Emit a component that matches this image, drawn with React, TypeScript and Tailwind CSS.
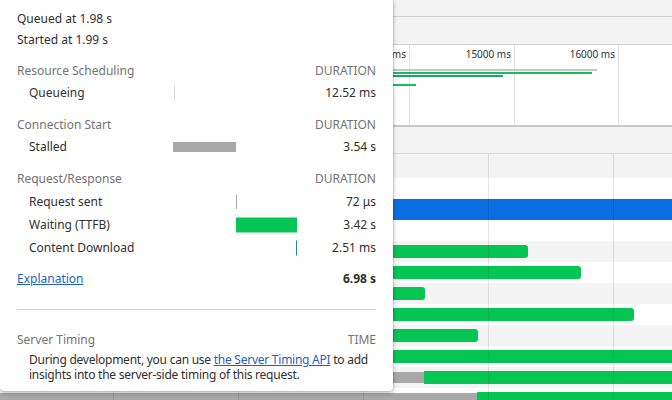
import type { ReactNode } from 'react'

type WaterfallRow = {
  height: number
  shaded?: boolean
  selected?: boolean
  stalled?: [number, number]
  waiting?: [number, number]
}

const rows: WaterfallRow[] = [
  { height: 24, shaded: true },
  { height: 21 },
  { height: 21, selected: true },
  { height: 21 },
  { height: 21, shaded: true, waiting: [300, 528] },
  { height: 21, waiting: [300, 581] },
  { height: 21, shaded: true, waiting: [300, 425] },
  { height: 21, waiting: [300, 634] },
  { height: 21, shaded: true, waiting: [300, 478] },
  { height: 21, waiting: [300, 720] },
  { height: 21, shaded: true, stalled: [0, 424], waiting: [424, 720] },
  { height: 21, stalled: [0, 477], waiting: [477, 720] },
]

const gridLines = [113, 238, 363, 488, 613]
const ticks = [
  { x: 409, label: '14000 ms' },
  { x: 514, label: '15000 ms' },
  { x: 618, label: '16000 ms' },
]

// thin lines in the overview strip: [top, right end, colour]
const overviewBars: [number, number, string][] = [
  [24, 597, '#c6c6c6'],
  [27, 592, '#12bf5c'],
  [30, 503, '#239f6e'],
  [39, 416, '#12bf5c'],
]

type TimingBar = { left: number; width: number; height: number; color: string }

function TimingRow({ name, value, bar, tall }: { name: string; value: string; bar?: TimingBar; tall?: boolean }) {
  return (
    <div className={`grid grid-cols-[156px_124px_1fr] items-center ${tall ? 'h-[23px]' : 'h-[22px]'}`}>
      <span className="pl-3">{name}</span>
      <div className="relative h-full">
        {bar && (
          <div
            className="absolute top-1/2 -translate-y-1/2"
            style={{ left: bar.left, width: bar.width, height: bar.height, background: bar.color }}
          />
        )}
      </div>
      <span className="text-right">{value}</span>
    </div>
  )
}

function Section({ title, label = 'DURATION', className = '', children }: { title: string; label?: string; className?: string; children?: ReactNode }) {
  return (
    <div className={className}>
      <div className="flex h-[22px] items-center justify-between text-[#737373]">
        <span>{title}</span>
        <span>{label}</span>
      </div>
      {children}
    </div>
  )
}

export default function App() {
  return (
    <div className="relative h-[400px] w-[672px] overflow-hidden bg-white font-['Noto_Sans',sans-serif] text-[#303030]">
      {/* Network panel behind the popover */}
      <div className="h-[17px] border-b border-[#d0d0d0] bg-[#f3f3f3]" />
      <div className="h-[28px] border-b border-[#d0d0d0] bg-[#f3f3f3]" />

      {/* Overview */}
      <div className="relative h-[82px] border-b-2 border-[#c8c8c8] bg-white text-[10px]">
        {ticks.map((t) => (
          <div key={t.x}>
            <div className="absolute inset-y-0 w-px bg-[#dedede]" style={{ left: t.x }} />
            <span className="absolute top-[2px] -translate-x-full pr-[3px] leading-[14px]" style={{ left: t.x }}>
              {t.label}
            </span>
          </div>
        ))}
        {overviewBars.map(([top, end, color]) => (
          <div key={top} className="absolute left-[250px] h-[2px]" style={{ top, width: end - 250, background: color }} />
        ))}
      </div>

      <div className="h-[27px] border-b border-[#dcdcdc] bg-[#f3f3f3]" />

      {/* Waterfall rows */}
      <div className="relative">
        {rows.map((r, i) => (
          <div
            key={i}
            className={`relative ${r.selected ? 'bg-[#0a6ee2]' : r.shaded ? 'bg-[#f4f4f4]' : 'bg-white'}`}
            style={{ height: r.height }}
          >
            {r.stalled && (
              <div
                className="absolute top-[5px] h-[11px] bg-[#a9a9a9]"
                style={{ left: r.stalled[0], width: r.stalled[1] - r.stalled[0] }}
              />
            )}
            {r.waiting && (
              <div
                className="absolute top-[4px] h-[13px] rounded-r-[3px] bg-[#05c654]"
                style={{ left: r.waiting[0], width: r.waiting[1] - r.waiting[0] }}
              />
            )}
          </div>
        ))}
        {gridLines.map((x) => (
          <div key={x} className="absolute inset-y-0 w-px bg-black/10" style={{ left: x }} />
        ))}
      </div>

      {/* Timing popover */}
      <div className="absolute left-0 top-0 h-[391px] w-[393px] rounded-b-[4px] bg-white px-[17px] pt-[8px] text-[12px] shadow-[0_0_0_1px_rgba(0,0,0,0.06),0_2px_4px_rgba(0,0,0,0.2),0_2px_6px_rgba(0,0,0,0.1)]">
        <div className="flex h-[21px] items-center">Queued at 1.98 s</div>
        <div className="flex h-[21px] items-center">Started at 1.99 s</div>

        <Section title="Resource Scheduling" className="mt-[10px]">
          <TimingRow name="Queueing" value="12.52 ms" bar={{ left: 1, width: 1, height: 15, color: '#d6d6d6' }} />
        </Section>

        <Section title="Connection Start" className="mt-[10px]">
          <TimingRow name="Stalled" value="3.54 s" bar={{ left: 0, width: 63, height: 10, color: '#a9a9a9' }} />
        </Section>

        <Section title="Request/Response" className="mt-[10px]">
          <TimingRow tall name="Request sent" value="72 μs" bar={{ left: 63, width: 1, height: 14, color: '#a9a9a9' }} />
          <TimingRow tall name="Waiting (TTFB)" value="3.42 s" bar={{ left: 63, width: 61, height: 15, color: '#05c654' }} />
          <TimingRow tall name="Content Download" value="2.51 ms" bar={{ left: 123, width: 1, height: 15, color: '#1e88d0' }} />
        </Section>

        <div className="mt-[9px] flex h-[22px] items-center justify-between">
          <a href="#" className="text-[#1f5fbf] underline">Explanation</a>
          <span className="font-bold">6.98 s</span>
        </div>

        <div className="mt-[19px] border-t border-[#d4d4d4]" />

        <Section title="Server Timing" label="TIME" className="mt-[19px]" />
        <p className="mt-[1px] whitespace-nowrap pl-3 leading-[15px] tracking-[-0.25px]">
          During development, you can use{' '}
          <a href="#" className="inline-block leading-[15px] text-[#1f5fbf] underline">the Server Timing API</a> to add
          <br />
          insights into the server-side timing of this request.
        </p>
      </div>
    </div>
  )
}
